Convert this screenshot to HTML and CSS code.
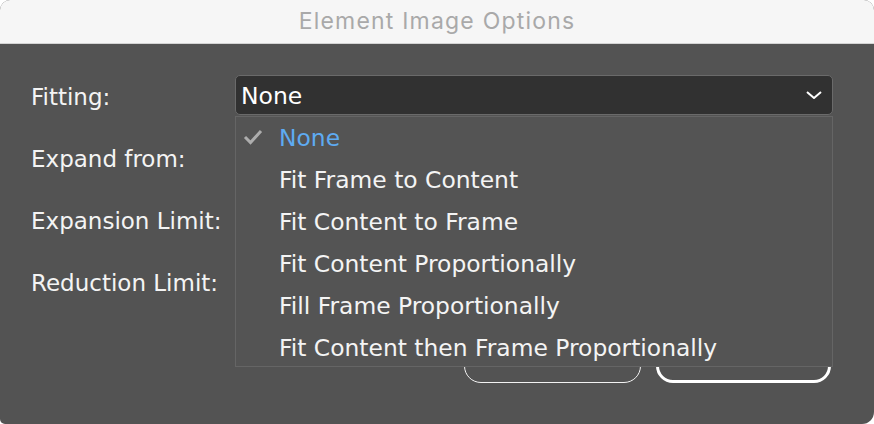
FILE: index.html
```html
<!DOCTYPE html>
<html>
<head>
<meta charset="utf-8">
<link rel="stylesheet" href="styles.css">
</head>
<body>
<div class="window">
  <div class="titlebar">Element Image Options</div>
  <div class="content">
    <div class="form">
      <div class="row">
        <div class="label">Fitting:</div>
        <div class="select-wrap">
          <div class="select">
            <span class="select-value">None</span>
            <svg class="chevron" width="16" height="8" viewBox="0 0 16 8"><polyline points="1,1 8,7 15,1" fill="none" stroke="#ffffff" stroke-width="2"/></svg>
          </div>
          <div class="menu">
            <div class="item selected">
              <svg class="check" width="20" height="16" viewBox="0 0 20 16"><polyline points="2,8 7.5,13.5 18,2" fill="none" stroke="#adadad" stroke-width="3"/></svg>
              <span>None</span>
            </div>
            <div class="item"><span>Fit Frame to Content</span></div>
            <div class="item"><span>Fit Content to Frame</span></div>
            <div class="item"><span>Fit Content Proportionally</span></div>
            <div class="item"><span>Fill Frame Proportionally</span></div>
            <div class="item"><span>Fit Content then Frame Proportionally</span></div>
          </div>
        </div>
      </div>
      <div class="row"><div class="label">Expand from:</div></div>
      <div class="row"><div class="label">Expansion Limit:</div></div>
      <div class="row"><div class="label">Reduction Limit:</div></div>
    </div>
    <div class="buttons">
      <div class="btn">Cancel</div>
      <div class="btn default">OK</div>
    </div>
  </div>
</div>
</body>
</html>
```

FILE: styles.css
```css
html, body {
  margin: 0;
  padding: 0;
  background: #ffffff;
}
.window {
  width: 874px;
  height: 424px;
  border-radius: 10px 10px 12px 5px;
  overflow: hidden;
  background: #535353;
  display: flex;
  flex-direction: column;
  font-family: "DejaVu Sans", Verdana, sans-serif;
}
.titlebar {
  height: 43px;
  flex: none;
  background: #f6f6f6;
  border-bottom: 1px solid #d4d4d4;
  color: #a9a9a9;
  font-family: Inter, "Open Sans", sans-serif;
  font-size: 23px;
  letter-spacing: 1.2px;
  line-height: 43px;
  text-align: center;
}
.content {
  flex: 1;
  display: flex;
  flex-direction: column;
  justify-content: space-between;
  padding: 31px 41px 41px 31px;
}
.form {
  display: flex;
  flex-direction: column;
  gap: 22px;
}
.row {
  height: 40px;
  display: flex;
  align-items: center;
}
.label {
  width: 204px;
  color: #f4f4f4;
  font-size: 23px;
  padding-top: 4px;
  white-space: nowrap;
}
.select-wrap {
  position: relative;
  width: 598px;
  height: 40px;
}
.select {
  height: 40px;
  box-sizing: border-box;
  background: #313131;
  border: 1.5px solid #6a6a6a;
  border-radius: 5px;
  display: flex;
  align-items: center;
  justify-content: space-between;
  padding: 2px 10px 0 5px;
  color: #ffffff;
  font-size: 23.5px;
}
.chevron {
  display: block;
  margin-top: -3px;
}
.menu {
  position: absolute;
  left: 0;
  top: 41px;
  width: 598px;
  height: 251px;
  box-sizing: border-box;
  background: #545454;
  border: 1px solid #656565;
  display: flex;
  flex-direction: column;
  z-index: 2;
}
.item {
  height: 42px;
  flex: none;
  display: flex;
  align-items: center;
  padding-left: 43px;
  position: relative;
  color: #f4f4f4;
  font-size: 23.4px;
  white-space: nowrap;
}
.item.selected {
  color: #5eabf2;
}
.check {
  position: absolute;
  left: 7px;
  top: 12px;
}
.buttons {
  display: flex;
  justify-content: flex-end;
  gap: 15px;
  padding-right: 2px;
}
.btn {
  width: 177px;
  height: 34px;
  box-sizing: border-box;
  border: 1.5px solid #f2f2f2;
  border-radius: 17px;
  color: #f2f2f2;
  font-size: 18px;
  text-align: center;
  line-height: 18px;
}
.btn.default {
  width: 175px;
  border: 3px solid #ffffff;
}
```
